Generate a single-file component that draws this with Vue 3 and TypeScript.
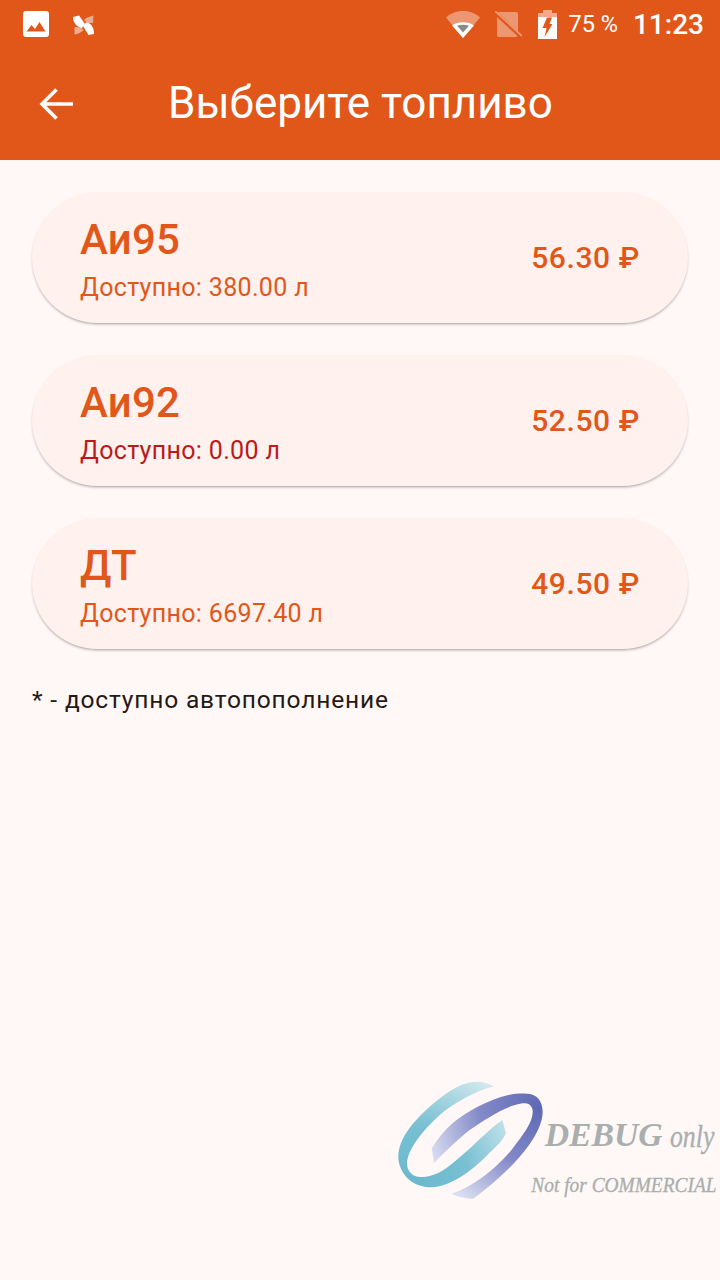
<script setup lang="ts">
interface Fuel { name: string; available: string; price: string; empty?: boolean }
const fuels: Fuel[] = [
  { name: 'Аи95', available: 'Доступно: 380.00 л', price: '56.30 ₽' },
  { name: 'Аи92', available: 'Доступно: 0.00 л', price: '52.50 ₽', empty: true },
  { name: 'ДТ', available: 'Доступно: 6697.40 л', price: '49.50 ₽' },
]
</script>

<template>
  <div class="page">
    <header class="top">
      <div class="status">
        <div class="status-left">
          <svg class="ic-image" width="26" height="26" viewBox="0 0 26 26">
            <rect width="26" height="26" rx="3" fill="#fff" />
            <path d="M3.500 20.500 8.500 14l3.500 4 4.500-7 6 9.500z" fill="#e1571a" />
          </svg>
          <svg class="ic-fan" width="22" height="20" viewBox="0 0 22 20">
            <path d="M20.500 0.500 20 8 14 8 11 5C13 3 17 1 20.500 0.500Z" fill="#fff" fill-opacity=".5" />
            <path d="M1.500 19.500 1.500 12 8 12.500 10.500 15C8 17.500 5 19 1.500 19.500Z" fill="#fff" fill-opacity=".5" />
            <path d="M0 2 6 0.500 12 9 9 13C4 12 0 8 0 2Z" fill="#fff" />
            <path d="M21 19 15.500 20 10 11 13 7.500C18 8 21 12 21 19Z" fill="#fff" />
          </svg>
        </div>
        <div class="status-right">
          <svg class="ic-wifi" width="36" height="28" viewBox="0 0 36 28">
            <path d="M1 7.500C5.500 3.500 11 1 18 1s12.500 2.500 17 6.500L18 28z" fill="#fff" fill-opacity=".38" />
            <path d="M7 15.500C10 13.500 14 12.300 18 12.300s8 1.200 11 3.200L18 28z" fill="#fff" />
            <path d="M12 15.700c1.800-.6 4-.9 6-.9s4.200.3 6 .9L18 22.500z" fill="#8a8a8a" />
          </svg>
          <svg class="ic-sim" width="27" height="26" viewBox="0 0 27 26">
            <rect x="2" y="1" width="21" height="25" rx="2" fill="#fff" fill-opacity=".38" />
            <path d="M-1 0.500 26 25.500" stroke="#e1571a" stroke-width="4" />
            <path d="M0 0 27 25" stroke="#fff" stroke-opacity=".38" stroke-width="1.800" />
          </svg>
          <svg class="ic-bat" width="19" height="29" viewBox="0 0 19 29">
            <path d="M5 0h9v3H5z" fill="#fff" fill-opacity=".5" />
            <path d="M0 3h19v4H0z" fill="#fff" fill-opacity=".5" />
            <path d="M0 7h19v22H0z" fill="#fff" />
            <path d="M9 7.500H14L11.500 14H14.500L6.500 27 8.500 18H4.500Z" fill="#e1571a" />
          </svg>
          <span class="pct">75 %</span>
          <span class="clock">11:23</span>
        </div>
      </div>
      <div class="bar">
        <svg class="back" width="36" height="34" viewBox="0 0 36 34">
          <path d="M34 17H4M17.500 2.500 3 17 17.500 31.500" fill="none" stroke="#fff" stroke-width="3.600" />
        </svg>
        <h1 class="title">Выберите топливо</h1>
      </div>
    </header>

    <main class="content">
      <div v-for="fuel in fuels" :key="fuel.name" class="card">
        <div class="info">
          <div class="name">{{ fuel.name }}</div>
          <div class="avail" :class="{ empty: fuel.empty }">{{ fuel.available }}</div>
        </div>
        <div class="price">{{ fuel.price }}</div>
      </div>
      <p class="note">* - доступно автопополнение</p>
    </main>

    <div class="watermark">
      <svg width="340" height="140" viewBox="0 0 1020 420">
        <defs>
          <radialGradient id="teal" cx="60" cy="300" r="350" gradientUnits="userSpaceOnUse">
            <stop offset="0" stop-color="#6ab8cd" />
            <stop offset=".45" stop-color="#78c0d2" />
            <stop offset="1" stop-color="#d0e8ee" />
          </radialGradient>
          <radialGradient id="blue" cx="430" cy="90" r="350" gradientUnits="userSpaceOnUse">
            <stop offset="0" stop-color="#5f69b3" />
            <stop offset=".5" stop-color="#8389c8" />
            <stop offset="1" stop-color="#dadef1" />
          </radialGradient>
        </defs>
        <g transform="translate(45 24)">
          <path d="M110 211C128 182 148 158 170 138 215 100 280 65 340 51 360 47 380 46 395 47 435 47 450 85 440 125 420 205 320 300 235 362 210 362 185 355 170 347 235 325 305 270 350 215 385 170 420 125 412 92 405 74 390 72 360 81 320 92 270 125 225 155 195 178 135 235 117 256Z" fill="url(#blue)" />
          <path d="M297 25C270 10 240 5 200 20 150 42 80 100 40 155 15 190 5 225 12 255 25 305 65 328 110 328 170 325 235 275 280 228 305 205 322 190 333 166L322 126C285 150 235 205 180 250 140 285 105 300 75 297 45 295 30 270 38 240 48 205 85 155 130 115 175 75 235 42 297 25Z" fill="url(#teal)" />
        </g>
        <text class="wm-debug" transform="translate(494 228) scale(.973 1)">DEBUG</text>
        <text class="wm-only" transform="translate(870 230) scale(.84 1)">only</text>
        <text class="wm-not" transform="translate(454 367) scale(.909 1)">Not for COMMERCIAL</text>
      </svg>
    </div>
  </div>
</template>

<style scoped>
.page {
  position: relative;
  width: 720px;
  height: 1280px;
  overflow: hidden;
  background: #fff8f6;
  font-family: Roboto, sans-serif;
}
.top {
  height: 160px;
  background: #e1571a;
  color: #fff;
}
.status {
  height: 48px;
  display: flex;
  align-items: center;
  justify-content: space-between;
  padding: 0 16px 0 23px;
}
.status-left {
  display: flex;
  align-items: center;
  gap: 24px;
}
.ic-fan {
  margin-top: 2px;
}
.status-right {
  display: flex;
  align-items: center;
}
.ic-sim {
  margin-left: 14px;
}
.ic-bat {
  margin-left: 16px;
}
.pct {
  margin-left: 11px;
  font-size: 23.5px;
}
.clock {
  margin-left: 15px;
  font-size: 28px;
  font-weight: 500;
}
.bar {
  height: 112px;
  display: flex;
  align-items: center;
  padding-left: 39px;
}
.back {
  flex: none;
}
.title {
  margin: 0 0 0 93px;
  padding-bottom: 2px;
  font-size: 44px;
  font-weight: 400;
  line-height: 1;
}
.content {
  padding: 32px;
  display: flex;
  flex-direction: column;
  gap: 32px;
}
.card {
  height: 131px;
  box-sizing: border-box;
  padding: 0 48px;
  display: flex;
  align-items: center;
  justify-content: space-between;
  background: #fff1ed;
  border-radius: 66px;
  box-shadow: 0 2px 3px -1px rgba(0, 0, 0, 0.38);
  color: #e1571a;
}
.info {
  padding-top: 2px;
}
.name {
  font-size: 42px;
  letter-spacing: 0.25px;
  font-weight: 500;
  line-height: 50px;
}
.avail {
  margin-top: 8px;
  font-size: 25px;
  letter-spacing: 0.33px;
  line-height: 30px;
}
.avail.empty {
  color: #ba1a1a;
}
.price {
  font-size: 30px;
  letter-spacing: 0.6px;
  font-weight: 500;
}
.note {
  margin: 2px 0 0;
  font-size: 24.5px;
  letter-spacing: 0.85px;
  line-height: 34px;
  color: #231917;
}
.watermark {
  position: absolute;
  left: 380px;
  top: 1070px;
  width: 340px;
  height: 140px;
}
.wm-debug {
  font-family: "Liberation Serif", serif;
  font-style: italic;
  font-weight: 700;
  font-size: 104px;
  fill: #a9aeae;
}
.wm-only {
  font-family: "Liberation Serif", serif;
  font-style: italic;
  font-size: 92px;
  fill: #a9aeae;
  stroke: #a9aeae;
  stroke-width: 1px;
}
.wm-not {
  font-family: "Liberation Serif", serif;
  font-style: italic;
  font-size: 64px;
  fill: #a9aeae;
  stroke: #a9aeae;
  stroke-width: 1px;
}
</style>

<style>
body {
  background: #fff8f6;
}
</style>
